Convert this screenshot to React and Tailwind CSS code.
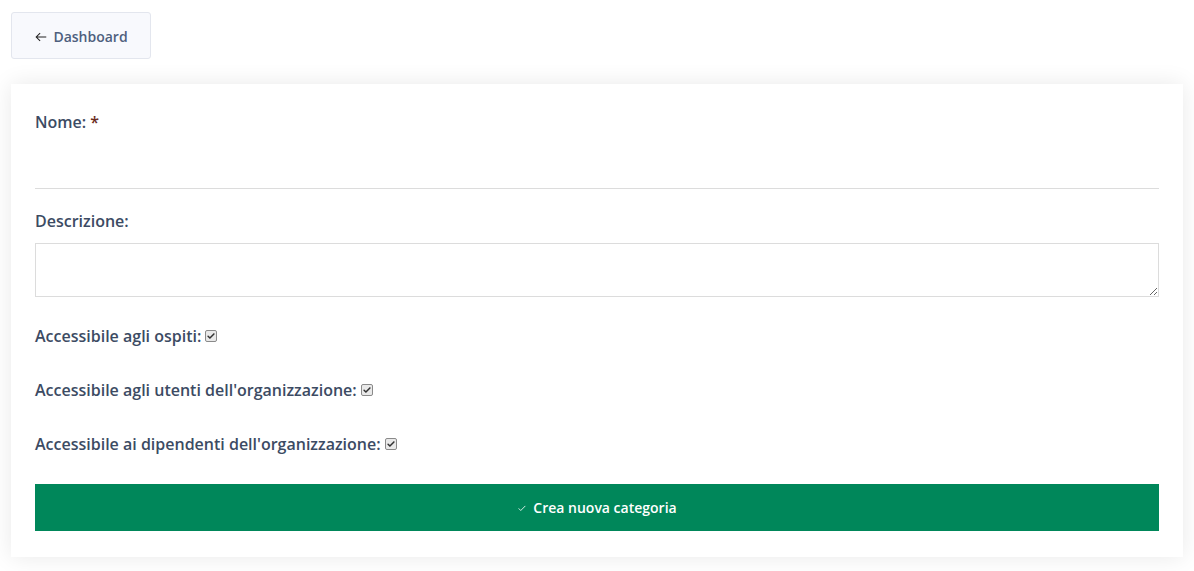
const font = { fontFamily: '"Open Sans", "Noto Sans", sans-serif' }

function Spunta() {
  return (
    <span className="inline-flex w-[12px] h-[12px] ml-[4px] rounded-[2px] border border-[#8a8a8a] bg-[#e9e9e9] items-center justify-center align-middle">
      <svg viewBox="0 0 12 12" className="w-[10px] h-[10px]"><path d="M2.5 6.3l2.2 2.2 4.8-5" fill="none" stroke="#333" strokeWidth="1.8" strokeLinecap="round" strokeLinejoin="round"/></svg>
    </span>
  )
}

export default function App() {
  const opzioni = [
    "Accessibile agli ospiti:",
    "Accessibile agli utenti dell'organizzazione:",
    "Accessibile ai dipendenti dell'organizzazione:",
  ]

  return (
    <div className="min-h-screen bg-white px-[11px] pt-[12px] pb-[15px]" style={font}>
      <button className="h-[47px] w-[140px] pt-[2px] bg-[#f8f9fd] border border-[#e3e6ee] rounded-[3px] flex items-center justify-center gap-[5px] text-[14px] font-semibold text-[#4e5f7e]">
        <svg viewBox="0 0 16 16" className="w-[14px] h-[14px]"><path d="M14 8H2.5M7 3.5L2.5 8 7 12.5" fill="none" stroke="#222" strokeWidth="1.2"/></svg>
        Dashboard
      </button>

      <div className="mt-[25px] bg-white shadow-[0_0_22px_rgba(0,0,0,0.09)] px-[24px] pt-[26px] pb-[26px] text-[#3c4b63]">
        <label className="block text-[16px] font-semibold leading-[24px]">Nome: <span className="text-[#6b2b1e]">*</span></label>
        <input className="mt-[6px] block w-full h-[49px] border-b border-[#dcdcdc] outline-none" />

        <label className="block mt-[20px] text-[16px] font-semibold leading-[24px]">Descrizione:</label>
        <textarea className="mt-[10px] block w-full h-[54px] border border-[#dcdcdc] outline-none" />

        <div className="mt-[27px] flex flex-col gap-[30px]">
          {opzioni.map(o => (
            <div key={o} className="text-[16px] font-semibold leading-[24px] flex items-center">
              {o}<Spunta />
            </div>
          ))}
        </div>

        <button className="mt-[28px] w-full h-[47px] bg-[#00875a] text-white text-[14px] font-semibold flex items-center justify-center gap-[6px]">
          <svg viewBox="0 0 12 12" className="w-[10px] h-[10px]"><path d="M2 6.5l2.5 2.5L10 3.5" fill="none" stroke="#fff" strokeWidth="1"/></svg>
          Crea nuova categoria
        </button>
      </div>
    </div>
  )
}
